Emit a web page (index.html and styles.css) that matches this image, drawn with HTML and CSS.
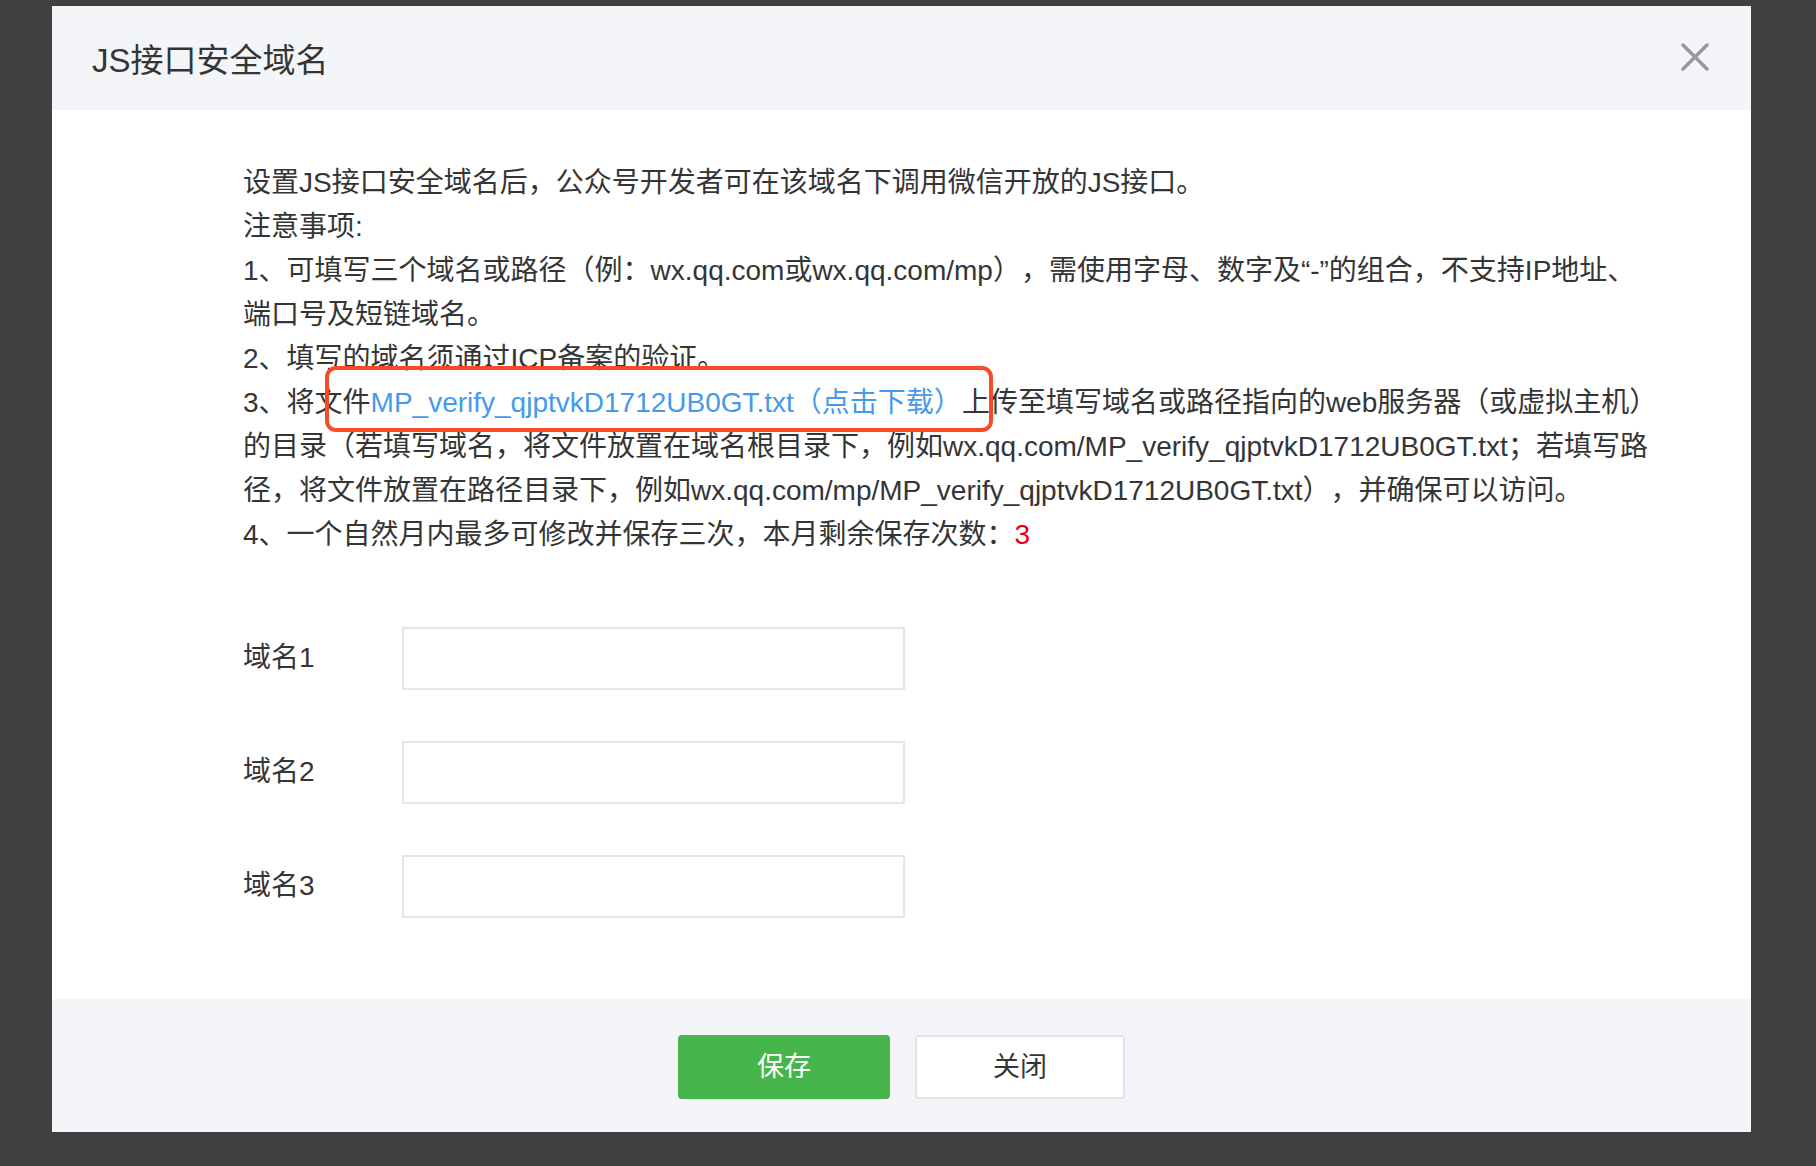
FILE: index.html
```html
<!DOCTYPE html>
<html lang="zh-CN">
<head>
  <meta charset="UTF-8">
  <meta name="viewport" content="width=device-width, initial-scale=1.0">
  <title>JS接口安全域名</title>
  <link rel="stylesheet" href="styles.css">
</head>
<body>
  <div class="dialog">
    <div class="dialog-hd">
      <h3 class="dialog-title">JS接口安全域名</h3>
      <a class="dialog-close" href="javascript:;" title="关闭">
        <svg width="30" height="30" viewBox="0 0 30 30">
          <path d="M3 3 L27 27 M27 3 L3 27" stroke="#999" stroke-width="3.5" stroke-linecap="round" fill="none"/>
        </svg>
      </a>
    </div>

    <div class="dialog-bd">
      <div class="tips">
        <p>设置JS接口安全域名后，公众号开发者可在该域名下调用微信开放的JS接口。</p>
        <p>注意事项:</p>
        <p>1、可填写三个域名或路径（例：wx.qq.com或wx.qq.com/mp），需使用字母、数字及“-”的组合，不支持IP地址、端口号及短链域名。</p>
        <p>2、填写的域名须通过ICP备案的验证。</p>
        <p>3、将文件<a class="link" href="javascript:;">MP_verify_qjptvkD1712UB0GT.txt（点击下载）</a>上传至填写域名或路径指向的web服务器（或虚拟主机）的目录（若填写域名，将文件放置在域名根目录下，例如wx.qq.com/MP_verify_qjptvkD1712UB0GT.txt；若填写路径，将文件放置在路径目录下，例如wx.qq.com/mp/MP_verify_qjptvkD1712UB0GT.txt），并确保可以访问。</p>
        <p>4、一个自然月内最多可修改并保存三次，本月剩余保存次数：<span class="num">3</span></p>
      </div>

      <form class="domain-form">
        <div class="form-row">
          <label for="domain1">域名1</label>
          <input type="text" id="domain1">
        </div>
        <div class="form-row">
          <label for="domain2">域名2</label>
          <input type="text" id="domain2">
        </div>
        <div class="form-row">
          <label for="domain3">域名3</label>
          <input type="text" id="domain3">
        </div>
      </form>

      <!-- 截图标注框 -->
      <div class="mark"></div>
    </div>

    <div class="dialog-ft">
      <button type="button" class="btn btn-primary">保存</button>
      <button type="button" class="btn btn-default">关闭</button>
    </div>
  </div>
</body>
</html>
```

FILE: styles.css
```css
body {
  margin: 0;
  padding: 6px 0 0;
  background-color: #404040;
  font-family: "Liberation Sans", "Noto Sans CJK SC", sans-serif;
  color: #353535;
  text-spacing-trim: space-all;
}

.dialog {
  width: 1699px;
  margin-left: 52px;
  background-color: #fff;
}

.dialog-hd {
  display: flex;
  align-items: center;
  justify-content: space-between;
  height: 104px;
  padding: 0 41px 0 40px;
  background-color: #f4f5f9;
}

.dialog-title {
  margin: 0;
  font-size: 33px;
  font-weight: normal;
  color: #353535;
}

.dialog-close {
  display: block;
  width: 30px;
  height: 30px;
  margin-top: -2px;
}

.dialog-bd {
  position: relative;
  padding: 51px 0 81px 191px;
}

.tips {
  width: 1416px;
  font-size: 28px;
  line-height: 44px;
}

.tips p {
  margin: 0;
}

.link {
  color: #459ae9;
  text-decoration: none;
}

.num {
  color: #e60012;
}

.domain-form {
  margin-top: 70px;
}

.form-row {
  display: flex;
  align-items: center;
  margin-bottom: 51px;
}

.form-row:last-child {
  margin-bottom: 0;
}

.form-row label {
  width: 159px;
  padding-bottom: 7px;
  font-size: 28px;
}

.form-row input {
  width: 503px;
  height: 63px;
  padding: 0 16px;
  border: 2px solid #e4e4ea;
  box-sizing: border-box;
  font-size: 26px;
  outline: none;
}

.mark {
  position: absolute;
  left: 273px;
  top: 256px;
  width: 668px;
  height: 66px;
  border: 4px solid #fa4a25;
  border-radius: 11px;
  box-sizing: border-box;
}

.dialog-ft {
  display: flex;
  justify-content: center;
  gap: 25px;
  padding: 36px 0 33px;
  background-color: #f4f5f9;
}

.btn {
  width: 212px;
  height: 64px;
  padding: 0 0 6px;
  border-radius: 4px;
  font-family: inherit;
  font-size: 27px;
  cursor: pointer;
  box-sizing: border-box;
}

.btn-primary {
  background-color: #46b64c;
  border: none;
  color: #fff;
}

.btn-default {
  width: 210px;
  background-color: #fff;
  border: 2px solid #e4e4e8;
  color: #353535;
}
```
